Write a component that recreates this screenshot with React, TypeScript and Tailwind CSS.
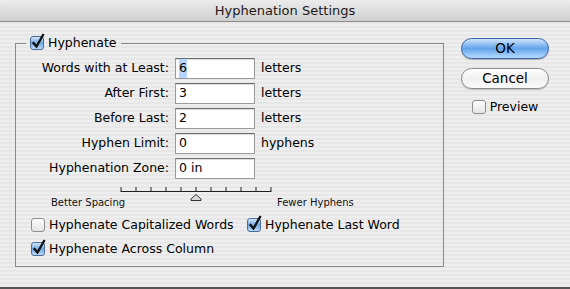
import React from 'react';

const FONT = "font-['DejaVu_Sans',sans-serif]";

const ROWS = [
  { label: 'Words with at Least:', value: '6', unit: 'letters', selected: true },
  { label: 'After First:', value: '3', unit: 'letters' },
  { label: 'Before Last:', value: '2', unit: 'letters' },
  { label: 'Hyphen Limit:', value: '0', unit: 'hyphens' },
  { label: 'Hyphenation Zone:', value: '0 in', unit: '' },
];

const Check: React.FC<{ checked?: boolean }> = ({ checked }) => (
  <span className="relative inline-block w-[14px] h-[14px] shrink-0">
    <span
      className={
        checked
          ? 'absolute inset-0 rounded-[3px] border border-[#4a6c9b] bg-gradient-to-b from-[#d4e6f8] via-[#6fa6e2] to-[#bcdcfb]'
          : 'absolute inset-0 rounded-[3px] border border-[#8e8e8e] bg-gradient-to-b from-[#ffffff] via-[#f0f0f0] to-[#e6e6e6]'
      }
    />
    {checked && (
      <svg className="absolute left-0 top-[-3px]" width="16" height="17" viewBox="0 0 16 17">
        <path d="M3.5 10 L6.5 13.5 L13 2" fill="none" stroke="#111" strokeWidth="2.3" strokeLinecap="square" />
      </svg>
    )}
  </span>
);

const Slider: React.FC = () => (
  <div className="flex items-start h-[24px]">
    <span className="text-[10px] text-[#111] w-[70px] pl-[35px] pt-[9px] whitespace-nowrap">Better Spacing</span>
    <div className="relative ml-[34px] w-[152px]">
      <svg width="152" height="22" viewBox="0 0 152 22">
        <line x1="1" y1="5.5" x2="151" y2="5.5" stroke="#222" strokeWidth="1" />
        {Array.from({ length: 11 }).map((_, i) => (
          <line key={i} x1={1 + i * 15} y1="1" x2={1 + i * 15} y2="6" stroke="#222" strokeWidth="1" />
        ))}
        <path d="M71 13 L76 8.5 L81 13 L81 14.5 L71 14.5 Z" fill="#d8d8d8" stroke="#333" strokeWidth="1" />
      </svg>
    </div>
    <span className="text-[10px] text-[#111] ml-[5px] pt-[9px] whitespace-nowrap">Fewer Hyphens</span>
  </div>
);

export default function App() {
  return (
    <div
      className={`${FONT} w-[570px] h-[289px] overflow-hidden flex flex-col text-[12.5px] text-black bg-[repeating-linear-gradient(180deg,#eeeeee_0px,#eeeeee_2px,#e7e7e7_2px,#e7e7e7_4px)]`}
    >
      {/* Title bar */}
      <div className="h-[22px] shrink-0 flex items-center justify-center rounded-t-[5px] border-b border-[#8c8c8c] bg-gradient-to-b from-[#ececec] to-[#cfcfcf] text-[13px] text-[#1a1a1a]">
        Hyphenation Settings
      </div>

      <div className="flex flex-1">
        {/* Group box */}
        <fieldset className="ml-[15px] mt-[12px] w-[429px] h-[233px] border border-[#8a8a8a] pl-0 pt-[6px]">
          <legend className="ml-[10px] px-[4px] flex items-center gap-[4px] h-[18px]">
            <Check checked />
            <span>Hyphenate</span>
          </legend>

          <div className="flex flex-col gap-[4px]">
            {ROWS.map(({ label, value, unit, selected }) => (
              <div key={label} className="flex items-center h-[21px]">
                <span className="w-[159px] text-right pr-[6px] whitespace-nowrap">{label}</span>
                <div className="w-[80px] h-[21px] bg-white border border-[#9a9a9a] border-t-[#6e6e6e] shadow-[inset_0_1px_1px_rgba(0,0,0,0.15)] flex items-center pl-[3px]">
                  <span className={selected ? 'bg-[#b5d5ff]' : ''}>{value}</span>
                </div>
                <span className="ml-[6px]">{unit}</span>
              </div>
            ))}
          </div>

          <div className="mt-[7px]">
            <Slider />
          </div>

          <div className="mt-[7px] pl-[15px] flex flex-col gap-[8px] leading-[16px]">
            <div className="flex items-center">
              <label className="flex items-center gap-[4px] w-[216px]">
                <Check />
                <span>Hyphenate Capitalized Words</span>
              </label>
              <label className="flex items-center gap-[4px]">
                <Check checked />
                <span>Hyphenate Last Word</span>
              </label>
            </div>
            <label className="flex items-center gap-[4px]">
              <Check checked />
              <span>Hyphenate Across Column</span>
            </label>
          </div>
        </fieldset>

        {/* Buttons */}
        <div className="ml-[17px] mt-[16px] flex flex-col items-center w-[88px] text-[13.5px]">
          <button className="w-[88px] h-[21px] rounded-full border border-[#3b64a8] bg-gradient-to-b from-[#cfe5fb] via-[#62a3ea] to-[#b5dbfd] shadow-[0_1px_1px_rgba(0,0,0,0.25)] leading-none">
            OK
          </button>
          <button className="mt-[9px] w-[88px] h-[21px] rounded-full border border-[#8a8a8a] bg-gradient-to-b from-[#ffffff] via-[#f0f0f0] to-[#fafafa] shadow-[0_1px_1px_rgba(0,0,0,0.2)] leading-none">
            Cancel
          </button>
          <label className="mt-[10px] flex items-center gap-[4px] leading-[16px] text-[12.5px]">
            <Check />
            <span>Preview</span>
          </label>
        </div>
      </div>

      <div className="h-[2px] shrink-0 bg-[#555555]" />
    </div>
  );
}
